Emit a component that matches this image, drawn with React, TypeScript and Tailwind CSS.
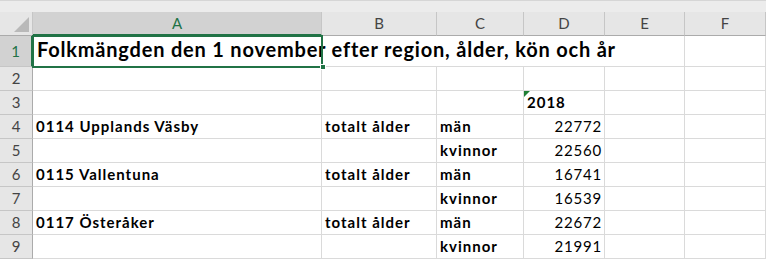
import type { ReactNode } from "react";

const COLS = ["A", "B", "C", "D", "E", "F"];

type Row = {
  a?: string;
  b?: string;
  c?: string;
  d?: string;
  dNum?: boolean;
};

const rows: Row[] = [
  {},
  { d: "2018" },
  { a: "0114 Upplands Väsby", b: "totalt ålder", c: "män", d: "22772", dNum: true },
  { c: "kvinnor", d: "22560", dNum: true },
  { a: "0115 Vallentuna", b: "totalt ålder", c: "män", d: "16741", dNum: true },
  { c: "kvinnor", d: "16539", dNum: true },
  { a: "0117 Österåker", b: "totalt ålder", c: "män", d: "22672", dNum: true },
  { c: "kvinnor", d: "21991", dNum: true },
];

const font = { fontFamily: "Lato, 'Open Sans', sans-serif" };

function Cell({
  children,
  noRight,
  right,
  className = "",
}: {
  children?: ReactNode;
  noRight?: boolean;
  right?: boolean;
  className?: string;
}) {
  return (
    <div
      className={`relative flex items-end border-b border-[#dadada] px-[3px] pb-[3px] text-[15px] leading-[18px] text-black whitespace-nowrap ${
        noRight ? "" : "border-r"
      } ${right ? "justify-end pr-[2px] tracking-[0.8px]" : "tracking-[1px]"} ${className}`}
    >
      {children}
    </div>
  );
}

function RowHead({ n, active }: { n: number; active?: boolean }) {
  return (
    <div
      className={`flex items-center justify-center border-b text-[15px] ${
        active
          ? "border-b-[#c6c6c6] border-r-2 border-r-[#217346] bg-[#d2d2d2] text-[#217346]"
          : "border-r border-b-[#c6c6c6] border-r-[#ababab] bg-[#e6e6e6] text-[#444]"
      }`}
    >
      {n}
    </div>
  );
}

export default function App() {
  return (
    <div className="h-[260px] w-[766px] overflow-hidden bg-white" style={font}>
      <div className="h-[12px] border-t border-[#d6d6d6] bg-[#ececec]" />
      <div className="grid grid-cols-[33px_289px_115px_87px_81px_80px_1fr] grid-rows-[24px_31px_repeat(8,24px)]">
        {/* column header row */}
        <div className="relative border-b border-r border-b-[#ababab] border-r-[#c6c6c6] bg-[#e6e6e6]">
          <div className="absolute bottom-[3px] right-[3px] h-0 w-0 border-b-[15px] border-l-[15px] border-b-[#b9b9b9] border-l-transparent" />
        </div>
        {COLS.map((c, i) => (
          <div
            key={c}
            className={`flex items-center justify-center border-r text-[15px] ${
              i === 0
                ? "border-b-2 border-b-[#217346] border-r-[#c6c6c6] bg-[#d2d2d2] text-[#217346]"
                : "border-b border-b-[#ababab] border-r-[#c6c6c6] bg-[#e6e6e6] text-[#444]"
            }`}
          >
            {c}
          </div>
        ))}

        {/* row 1: title spills over B–E */}
        <RowHead n={1} active />
        <Cell noRight className="z-10 pb-[5px] pl-[4px]">
          <span className="text-[20px] font-bold leading-[24px] tracking-[0.8px]">
            Folkmängden den 1 november efter region, ålder, kön och år
          </span>
          <div className="pointer-events-none absolute -left-px -top-px bottom-[-2px] right-[-1px] border-2 border-[#217346]" />
          <div className="absolute bottom-[-4px] right-[-4px] h-[6px] w-[6px] border border-white bg-[#217346]" />
        </Cell>
        <Cell noRight />
        <Cell noRight />
        <Cell noRight />
        <Cell />
        <Cell />

        {rows.map((r, idx) => {
          const n = idx + 2;
          return [
            <RowHead key={`h${n}`} n={n} />,
            <Cell key={`a${n}`} className="font-bold">{r.a}</Cell>,
            <Cell key={`b${n}`} className="font-bold">{r.b}</Cell>,
            <Cell key={`c${n}`} className="font-bold">{r.c}</Cell>,
            <Cell key={`d${n}`} right={r.dNum} className={r.dNum ? "" : "font-bold"}>
              {n === 3 && (
                <div className="absolute left-0 top-0 h-0 w-0 border-b-[6px] border-l-[6px] border-b-transparent border-l-[#1e7e34]" />
              )}
              {r.d}
            </Cell>,
            <Cell key={`e${n}`} />,
            <Cell key={`f${n}`} />,
          ];
        })}
      </div>
    </div>
  );
}
